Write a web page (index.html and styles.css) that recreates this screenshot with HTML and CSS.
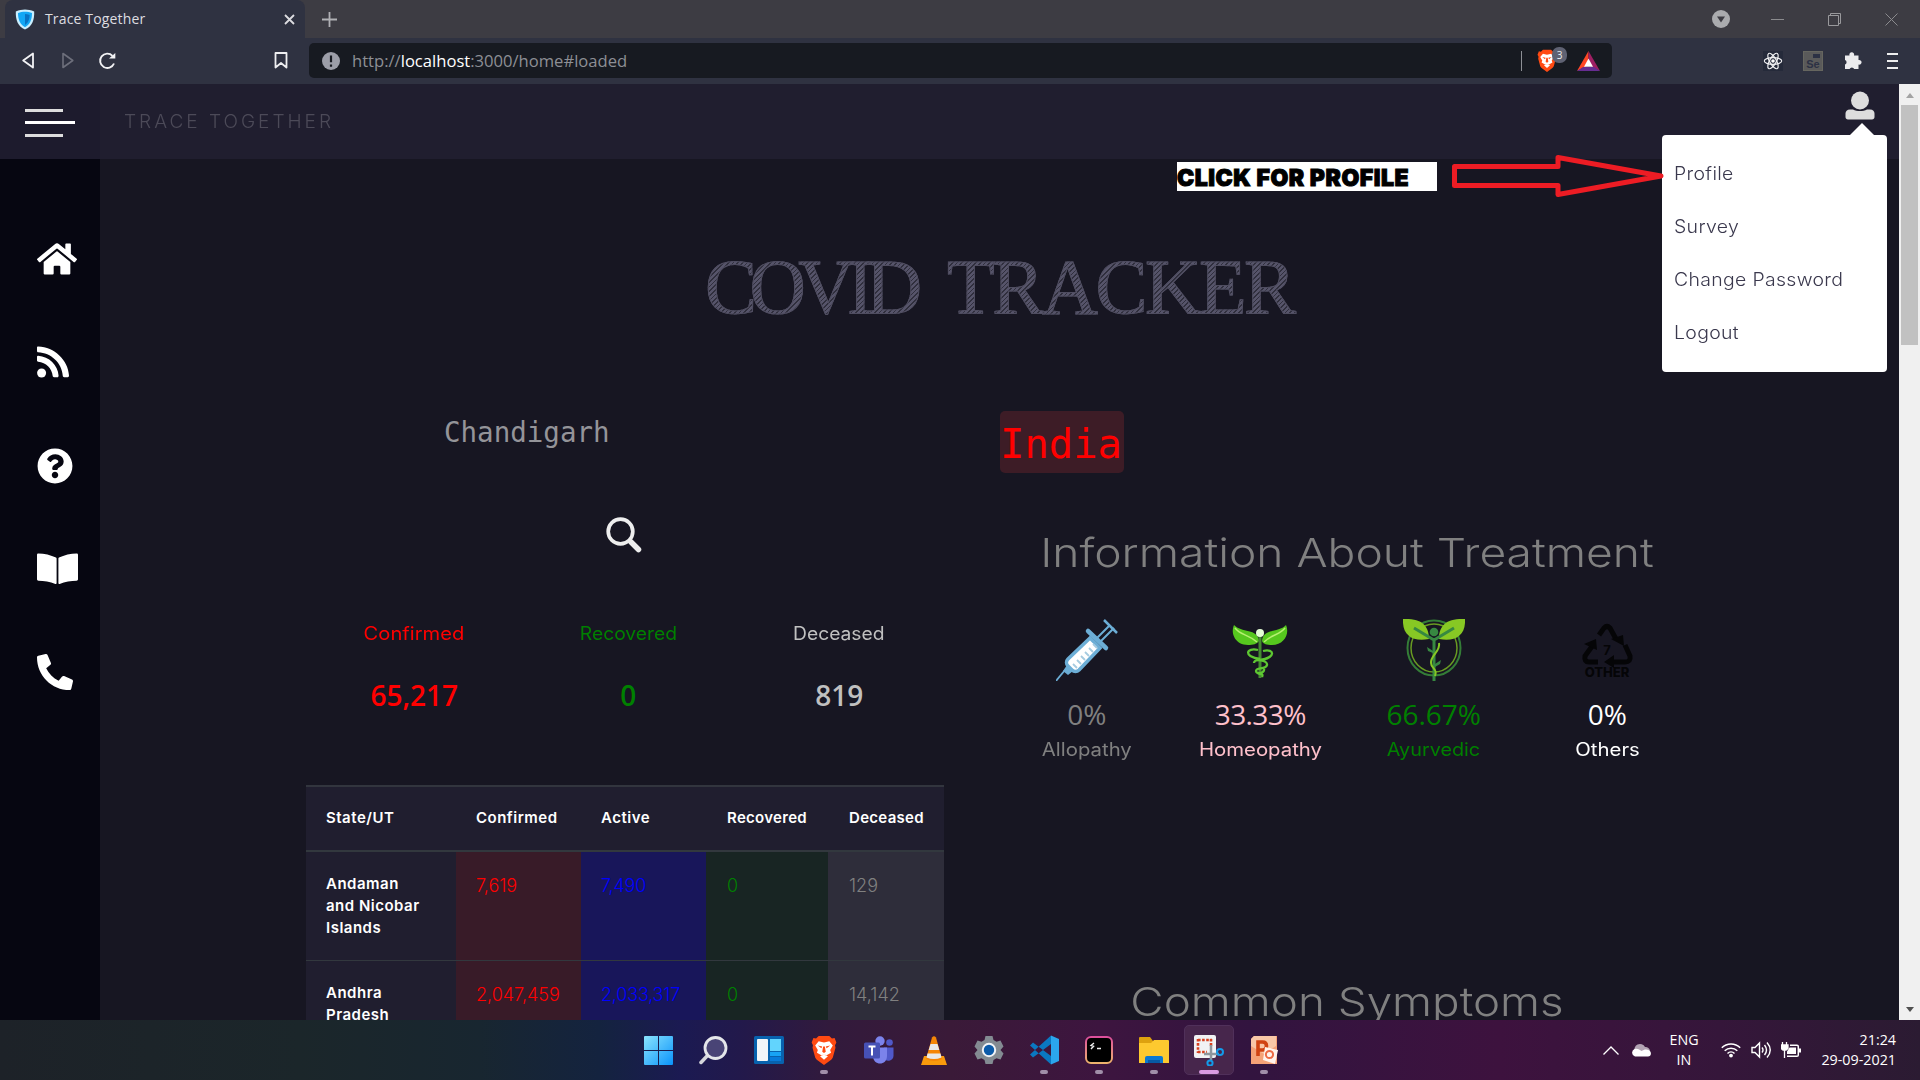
FILE: index.html
```html
<!DOCTYPE html>
<html lang="en">
<head>
<meta charset="utf-8">
<title>Trace Together</title>
<link rel="stylesheet" href="styles.css">
</head>
<body>
<div class="tabstrip">
  <div class="tab">
    <svg class="shield" viewBox="0 0 20 21"><path d="M10 .5C13 .5 16 1.2 19.2 2.4 19.5 11 17 17.5 10 20.5 3 17.5.5 11 .8 2.4 4 1.2 7 .5 10 .5z" fill="#c9efff"/><path d="M10 2.8c2.300 0 4.800.5 7 1.300C17 10.500 15 15.500 10 18.200 5 15.500 3 10.500 3 4.100 5.200 3.300 7.700 2.800 10 2.800z" fill="#12a7f5"/><path d="M10 5v11c3.500-2.500 4.500-6 4.700-10C13 5.300 11.500 5 10 5z" fill="#0873c4"/></svg>
    <span class="tab-title">Trace Together</span>
    <svg width="11" height="11" viewBox="0 0 11 11"><path d="M1 1l9 9M10 1l-9 9" stroke="#dcdce0" stroke-width="1.800"/></svg>
  </div>
  <svg class="plus" width="15" height="15" viewBox="0 0 15 15"><path d="M7.500 0v15M0 7.500h15" stroke="#b0b0b4" stroke-width="1.800"/></svg>
  <div class="window-buttons">
    <svg width="18" height="18" viewBox="0 0 18 18"><circle cx="9" cy="9" r="9" fill="#aaabae"/><path d="M5 6.500h8L9 12.500z" fill="#3d3c43"/></svg>
    <svg width="13" height="13" viewBox="0 0 13 13"><path d="M0 6.500h13" stroke="#8b8b8e"/></svg>
    <svg width="13" height="13" viewBox="0 0 13 13"><path d="M.5 2.500h10v10H.5zM2.500 2.500v-2h10v10h-2" fill="none" stroke="#99999c"/></svg>
    <svg width="13" height="13" viewBox="0 0 13 13"><path d="M.5.5l12 12M12.500.5l-12 12" stroke="#8b8b8e"/></svg>
  </div>
</div>

<div class="toolbar">
  <svg class="nav-back" width="12" height="17" viewBox="0 0 12 17"><path d="M11 1.500v14L1.200 8.500z" fill="none" stroke="#f2f2f4" stroke-width="1.800" stroke-linejoin="round"/></svg>
  <svg class="nav-fwd" width="12" height="17" viewBox="0 0 12 17"><path d="M1 1.500v14l9.800-7z" fill="none" stroke="#6d6f7b" stroke-width="1.600" stroke-linejoin="round"/></svg>
  <svg class="nav-reload" width="18" height="18" viewBox="0 0 18 18"><path d="M14.500 3.800A7.200 7.200 0 1 0 16 11.500" fill="none" stroke="#f2f2f4" stroke-width="1.900"/><path d="M11 6.500h6.300V1z" fill="#f2f2f4"/></svg>
  <svg class="bookmark" width="14" height="17" viewBox="0 0 14 17"><path d="M1.500 1h11v14.500L7 11l-5.500 4.500z" fill="none" stroke="#eeeef0" stroke-width="1.800" stroke-linejoin="round"/></svg>
  <div class="urlbar">
    <svg class="info" width="18" height="18" viewBox="0 0 18 18"><circle cx="9" cy="9" r="9" fill="#9c9ea8"/><path d="M9 3.500v6.800M9 12.500v2.200" stroke="#171a21" stroke-width="2.200"/></svg>
    <span class="url">http://<b>localhost</b>:3000/home#loaded</span>
    <span class="url-sep"></span>
    <span class="shields">
      <svg width="20" height="23" viewBox="0 0 28 34"><use href="#lion"/></svg>
      <span class="badge">3</span>
    </span>
    <svg width="23" height="20" viewBox="0 0 23 20"><path d="M11.500 0L0 20l11.500-6z" fill="#ff4724"/><path d="M11.500 0L23 20l-11.500-6z" fill="#9e1f63"/><path d="M0 20h23l-6-4H6z" fill="#662d91"/><path d="M11.500 7.500L16 15.800H7z" fill="#fff"/></svg>
  </div>
  <div class="extensions">
    <svg width="20" height="20" viewBox="0 0 20 20"><rect width="20" height="20" fill="#252a3a"/><g fill="none" stroke="#f0f0f2" stroke-width="1.200"><ellipse cx="10" cy="10" rx="8.700" ry="3.300"/><ellipse cx="10" cy="10" rx="8.700" ry="3.300" transform="rotate(60 10 10)"/><ellipse cx="10" cy="10" rx="8.700" ry="3.300" transform="rotate(120 10 10)"/></g><circle cx="10" cy="10" r="1.800" fill="#fff"/></svg>
    <span class="selenium"><i></i>Se</span>
    <svg width="19" height="19" viewBox="0 0 19 19"><path d="M1 4.500h4.500a2.400 2.400 0 1 1 4.500 0h4.500V9a2.400 2.400 0 1 1 0 4.600V18H10.200a2.500 2.500 0 0 0-4.600 0H1v-4.600a2.400 2.400 0 0 0 0-4.500z" fill="#ececee"/></svg>
    <span class="menu-lines"><i></i><i></i><i></i></span>
  </div>
</div>

<div class="viewport">
  <div class="page">
    <header class="site-header">
      <div class="burger-cell"><span class="burger"><i></i><i></i><i></i></span></div>
      <span class="brand">TRACE TOGETHER</span>
      <div class="account">
        <svg width="30" height="30" viewBox="0 0 30 30"><circle cx="15" cy="9.500" r="9" fill="#ddd"/><path d="M5 18.500h3c4 2 10 2 14 0h3c3 0 4.500 2 4.500 4v3.500c0 1.500-1 2.500-2.500 2.500H3C1.500 28.500.5 27.500.5 26v-3.500c0-2 1.500-4 4.500-4z" fill="#ddd"/></svg>
        <nav class="dropdown"><a>Profile</a><a>Survey</a><a>Change Password</a><a>Logout</a></nav>
      </div>
    </header>
    <div class="body">
      <nav class="sidebar">
        <svg width="40" height="36" viewBox="0 0 576 512"><path d="M280.370 148.260L96 300.110V464a16 16 0 0 0 16 16l112.060-.29a16 16 0 0 0 15.920-16V368a16 16 0 0 1 16-16h64a16 16 0 0 1 16 16v95.640a16 16 0 0 0 16 16.050L464 480a16 16 0 0 0 16-16V300L295.670 148.260a12.190 12.190 0 0 0-15.300 0zM571.600 251.470L488 182.560V44.050a12 12 0 0 0-12-12h-56a12 12 0 0 0-12 12v72.610L318.470 43a48 48 0 0 0-61 0L4.340 251.470a12 12 0 0 0-1.600 16.900l25.500 31A12 12 0 0 0 45.150 301l235.220-193.740a12.190 12.190 0 0 1 15.300 0L530.900 301a12 12 0 0 0 16.900-1.600l25.500-31a12 12 0 0 0-1.700-16.930z"/></svg>
        <svg width="32" height="36" viewBox="0 0 32 36"><circle cx="4.600" cy="29" r="4.500"/><path d="M0 5v-1.500C0 2.800.6 2.400 1.200 2.500 17.500 3.100 31 16 32 31.500c0 1-.5 1.700-1.300 1.700h-3.600c-.7 0-1.200-.5-1.300-1.200C25 19 14 8.800 1.100 8.300.4 8.200 0 7.700 0 7zM0 14v-1.300c0-.7.5-1.100 1.200-1C12 12.500 21 21 21.600 31.700c0 .9-.5 1.500-1.200 1.500H17c-.7 0-1.200-.5-1.300-1.100C15 24.500 9 18.300 1.100 17.800.5 17.700 0 17.300 0 16.600z"/></svg>
        <svg width="36" height="36" viewBox="0 0 512 512"><path d="M504 256c0 136.997-111.043 248-248 248S8 392.997 8 256C8 119.083 119.043 8 256 8s248 111.083 248 248zM262.655 90c-54.497 0-89.255 22.957-116.549 63.758-3.536 5.286-2.353 12.415 2.715 16.258l34.699 26.310c5.205 3.947 12.621 3.008 16.665-2.122 17.864-22.658 30.113-35.797 57.303-35.797 20.429 0 45.698 13.148 45.698 32.958 0 14.976-12.363 22.667-32.534 33.976C247.128 238.528 216 254.941 216 296v4c0 6.627 5.373 12 12 12h56c6.627 0 12-5.373 12-12v-1.333c0-28.462 83.186-29.647 83.186-106.667 0-58.002-60.165-102-116.531-102zM256 338c-25.365 0-46 20.635-46 46 0 25.364 20.635 46 46 46s46-20.636 46-46c0-25.365-20.635-46-46-46z"/></svg>
        <svg width="41" height="36" viewBox="0 0 41 36"><path d="M0 3.800c0-.9.600-1.400 1.400-1.400C7 2.600 14 3.800 19 6.600c.5.300.6.600.6 1.100v24.600c0 .6-.6.900-1.200.6C13 30.500 7 29.900 1.400 29.700.6 29.600 0 29 0 28.300zM41 3.800c0-.9-.6-1.400-1.400-1.400C34 2.600 27 3.800 22 6.600c-.5.300-.6.600-.6 1.100v24.600c0 .6.600.9 1.200.6 5.400-2.400 11.400-3 17-3.200.8-.1 1.400-.7 1.400-1.400z"/></svg>
        <svg class="flip" width="36" height="36" viewBox="0 0 512 512"><path d="M493.400 24.600l-104-24c-11.300-2.600-22.900 3.300-27.500 13.900l-48 112c-4.200 9.800-1.400 21.300 6.900 28l60.600 49.600c-36 76.700-98.900 140.500-177.200 177.200l-49.600-60.600c-6.800-8.300-18.200-11.100-28-6.900l-112 48C3.900 366.500-2 378.100.6 389.400l24 104C27.100 504.200 36.700 512 48 512c256.100 0 464-207.500 464-464 0-11.200-7.700-20.900-18.600-23.400z"/></svg>
      </nav>
      <main class="main">
        <h1 class="title"><span class="word-a">COVID</span> <span>TRACKER</span></h1>
        <div class="columns">
          <section class="region">
            <div class="place">Chandigarh</div>
            <svg class="search" width="36" height="36" viewBox="0 0 36 36"><circle cx="14.500" cy="14.500" r="12.300" fill="none" stroke="#eee" stroke-width="3.700"/><path d="M25 25l7.500 7.500" stroke="#eee" stroke-width="5.500" stroke-linecap="round"/></svg>
            <div class="stats">
              <div class="stat red"><span class="wide">Confirmed</span><strong>65,217</strong></div>
              <div class="stat green"><span>Recovered</span><strong>0</strong></div>
              <div class="stat silver"><span>Deceased</span><strong>819</strong></div>
            </div>
            <table class="states">
              <colgroup><col class="c1"><col class="c2"><col class="c3"><col class="c4"><col class="c5"></colgroup>
              <thead><tr><th>State/UT</th><th>Confirmed</th><th>Active</th><th>Recovered</th><th>Deceased</th></tr></thead>
              <tbody>
                <tr><th>Andaman and Nicobar Islands</th><td class="conf">7,619</td><td class="act">7,490</td><td class="rec">0</td><td class="dec">129</td></tr>
                <tr><th>Andhra Pradesh</th><td class="conf">2,047,459</td><td class="act">2,033,317</td><td class="rec">0</td><td class="dec">14,142</td></tr>
              </tbody>
            </table>
          </section>
          <section class="country">
            <div class="india">India</div>
            <h2>Information About Treatment</h2>
            <div class="treatments">
              <div class="treat gray">
                <svg width="62" height="62" viewBox="0 0 62 62"><path d="M0 62l9-11" stroke="#6caed6" stroke-width="1.800"/><path d="M7 52l4-6 6 6-5 4z" fill="#6caed6"/><path d="M34 19L12 40c-2 2-2 5 0 7l4 4c2 2 5 2 7 0l21-22z" fill="#fff" stroke="#6caed6" stroke-width="3.500"/><path d="M32 12l18 17" stroke="#6caed6" stroke-width="4.500" stroke-linecap="round"/><path d="M41 19L54 6M45 22L58 9" stroke="#6caed6" stroke-width="2"/><path d="M48 1l13 13" stroke="#6caed6" stroke-width="2.500"/><path d="M37 25l4 4M33 29l4 4M29 33l4 4M25 37l4 4M21 41l4 4M17 45l4 4" stroke="#a6cbe0" stroke-width="1.800"/></svg>
                <b>0%</b><span>Allopathy</span></div>
              <div class="treat pink">
                <svg width="62" height="62" viewBox="0 0 62 62"><path d="M30 22C29 9 12 14 5 6c-4 9 2 20 14 20 5 0 9-1 11-4z" fill="#56c71e"/><path d="M33 22C34 9 50 14 57 6c4 9-2 20-14 20-5 0-9-1-10-4z" fill="#56c71e"/><path d="M6 9c5 7 13 6 22 14M56 9c-5 7-13 6-21 14" stroke="#b5ef70" fill="none" stroke-width="1.500"/><path d="M31 17v42" stroke="#458b32" stroke-width="3"/><path d="M31 40c-17-2-14-12-2-9M31 41c16-2 15-12 3-9M25 44c0-5 14-3 13 2s-11 2-11 6 9 2 8-2M28 53c2 4 7 0 5 5" fill="none" stroke="#5ec832" stroke-width="2.300"/><circle cx="31" cy="14" r="4" fill="#e4ffd5"/></svg>
                <b class="tight">33.33%</b><span>Homeopathy</span></div>
              <div class="treat green">
                <svg width="62" height="62" viewBox="0 0 62 62"><ellipse cx="31" cy="29" rx="26.500" ry="27.500" fill="none" stroke="#347d37" stroke-width="2"/><ellipse cx="31" cy="29" rx="23" ry="24" fill="none" stroke="#689b22" stroke-width="1.500"/><path d="M0 0c20-1 26 8 26 20C10 23-1 17 0 0zM62 0c-20-1-26 8-26 20C52 23 63 17 62 0z" fill="#87c824"/><path d="M11 9l20 12L51 9M31 19v43" fill="none" stroke="#378841" stroke-width="3"/><circle cx="31" cy="13" r="4.300" fill="#378841"/><path d="M36 24c2 8-9 13-8 20 0 6 7 5 4 13" fill="none" stroke="#86c725" stroke-width="2"/><path d="M32 45l6-4-1 4-5 3zM30 32l-6-4 1 4 5 2z" fill="#378841"/></svg>
                <b>66.67%</b><span class="less">Ayurvedic</span></div>
              <div class="treat white">
                <svg width="62" height="62" viewBox="0 0 62 62" fill="none" stroke="#050507" stroke-width="5"><path d="M23 16l5-7q3-3 6 0l6 11M17 26L9 37q-1 6 4 6h9M49 26l5 11q1 6-5 6H37"/><g fill="#050507" stroke="none"><path d="M35 20l12-4 1 11zM8 25l12-5 1 11zM38 36v13l-10-6z"/><text x="31" y="36" text-anchor="middle" class="seven">7</text><text x="31" y="58" text-anchor="middle" class="other">OTHER</text></g></svg>
                <b>0%</b><span>Others</span></div>
            </div>
            <h2 class="symptoms">Common Symptoms</h2>
          </section>
        </div>
      </main>
    </div>
    <div class="callout">CLICK FOR PROFILE</div>
    <svg class="arrow" width="216" height="46" viewBox="0 0 216 46"><path d="M4.500 18.500H108V9.500L211 28 108 46.500 108 37.500H4.500z" transform="translate(0 -5)" fill="none" stroke="#ed1c24" stroke-width="5" stroke-linejoin="round"/></svg>
  </div>
  <div class="scrollbar"><i class="up"></i><i class="thumb"></i><i class="down"></i></div>
</div>

<footer class="taskbar">
  <div class="apps">
    <span class="app"><svg width="29" height="29" viewBox="0 0 29 29"><linearGradient id="w" x2="1" y2="1"><stop stop-color="#8ae4fd"/><stop offset="1" stop-color="#0a93fb"/></linearGradient><path d="M0 1q0-1 1-1h13v14H0zM15 0h13q1 0 1 1v13H15zM0 15h14v14H1q-1 0-1-1zM15 15h14v13q0 1-1 1H15z" fill="url(#w)"/></svg></span>
    <span class="app"><svg width="29" height="29" viewBox="0 0 29 29"><path d="M9 19l-7 7.500" stroke="#d5d7dc" stroke-width="3.500" stroke-linecap="round"/><circle cx="16.500" cy="12" r="10.500" fill="#494476" stroke="#e4e6ea" stroke-width="2.800"/></svg></span>
    <span class="app"><svg width="30" height="28" viewBox="0 0 30 28"><rect width="30" height="28" rx="1.500" fill="#0862ae"/><rect x="3" y="3" width="11" height="22" rx="1" fill="#f3f5f8"/><path d="M16 3h11v12H16z" fill="#62d4fd"/><path d="M16 16h11v4H16z" fill="#17a3f5"/><path d="M16 21h11v4H16z" fill="#077ad9"/></svg></span>
    <span class="app on"><svg width="26" height="30" viewBox="0 0 28 34"><g id="lion"><path d="M8 1h12l3 3 3-.5 2 5-1.500 3 .5 3-3 11q-1 2-3 3.500L14 34l-7-5q-2-1.500-3-3.500l-3-11 .5-3L0 8.500l2-5 3 .5z" fill="#ff4a12"/><path d="M14 8.500L20 7l4 5-3 5 1 3-5 3-3-1-3 1-5-3 1-3-3-5 4-5zM9.500 24l4.500-2 4.500 2L14 28z" fill="#fff"/><path d="M7 12l5 1-1 2zM21 12l-5 1 1 2zM13 13h2l1 6-2 1.500L12 19zM9 17l2 4M19 17l-2 4" fill="#ff4a12"/></g></svg></span>
    <span class="app"><svg width="30" height="29" viewBox="0 0 30 29"><circle cx="16" cy="5" r="4.700" fill="#7b83eb"/><circle cx="25.500" cy="6.500" r="3.300" fill="#5059c9"/><path d="M20 11.500h9.500v8c0 6-7 6-9.500 4z" fill="#5059c9"/><path d="M9 11.500h14V20c0 10-14 10-14 0z" fill="#7b83eb"/><rect y="6.500" width="16" height="16" rx="1.500" fill="#4651b5"/><path d="M4.500 10.500h7M8 10.500v9" stroke="#fff" stroke-width="2"/></svg></span>
    <span class="app"><svg width="26" height="29" viewBox="0 0 26 29"><path d="M3 20h20l3 9H0z" fill="#f99a0c"/><path d="M11 1.500q2-2.500 4 0L21 23q-8 4-16 0z" fill="#f58606"/><path d="M9.500 8h7l1.800 6H7.700zM6.500 17.500h13l1 4q-7.500 3-15 0z" fill="#e9e9e9"/></svg></span>
    <span class="app"><svg width="30" height="30" viewBox="0 0 30 30"><path d="M11.500 1h7l1 4 3 1.700L26.500 5.500l3 6L26.500 15l3 3.500-3 6-4-1.200-3 1.700-1 4h-7l-1-4-3-1.700-4 1.200-3-6 3-3.500-3-3.500 3-6 4 1.200 3-1.700z" fill="#838b92"/><circle cx="15" cy="15" r="6.200" fill="#0b5ba9" stroke="#f0f3f6" stroke-width="2"/></svg></span>
    <span class="app on"><svg width="30" height="30" viewBox="0 0 30 30"><path d="M22 .5l8 3.500v22l-8 3.500z" fill="#2ba6ed"/><path d="M22 .5L1 19.500l3 3L22 9zM22 29.500L1 10.500l3-3L22 21z" fill="#0a78c1"/></svg></span>
    <span class="app on"><svg width="28" height="28" viewBox="0 0 28 28"><linearGradient id="t" y2="1" x2="0"><stop stop-color="#dd4f9d"/><stop offset="1" stop-color="#eeb36d"/></linearGradient><rect x="1" y="1" width="26" height="26" rx="5" fill="#000" stroke="url(#t)" stroke-width="2"/><path d="M9 7L6 9.500l2.500.8L6 13M12 12.500h4" fill="none" stroke="#eee" stroke-width="1.400"/></svg></span>
    <span class="app on"><svg width="30" height="28" viewBox="0 0 30 28"><path d="M0 2q0-1 1-1h10l3 4v8H0z" fill="#dda20f"/><path d="M0 7h12l3-3h14q1 0 1 1v22H0z" fill="#fdc92f"/><path d="M6 27v-5q0-2 2-2h14q2 0 2 2v5z" fill="#0b78d1"/><path d="M9 24h12v3H9z" fill="#0759a5"/></svg></span>
    <span class="app on active"><svg width="30" height="31" viewBox="0 0 30 31"><rect width="22" height="23" rx="2" fill="#f1f2f4"/><path d="M4 5h14M4 17h9M4 4v14M17 4v7" fill="none" stroke="#d8401e" stroke-width="2.600" stroke-dasharray="2.600 1.500"/><path d="M17 10v15M10 19h15" stroke="#8e969c" stroke-width="2.500"/><circle cx="16" cy="28" r="2.600" fill="none" stroke="#139bea" stroke-width="2"/><circle cx="26" cy="17" r="3" fill="none" stroke="#139bea" stroke-width="2"/></svg></span>
    <span class="app on"><svg width="28" height="28" viewBox="0 0 28 28"><path d="M1 3L4 0h23v28H1z" fill="#f5a277"/><path d="M4 0h22v10L14 18 1 10V3z" fill="#f9c7a7"/><path d="M8 20V6h4.500q4 0 4 4t-4 4H8" fill="none" stroke="#d04312" stroke-width="3.600"/><path d="M15 11l13 3-3 14-12-4z" fill="#fff3ec"/><circle cx="19.500" cy="18.500" r="3.600" fill="none" stroke="#ed6b45" stroke-width="2"/></svg></span>
  </div>
  <div class="tray">
    <svg class="caret" width="16" height="9" viewBox="0 0 16 9"><path d="M.5 8.500L8 1l7.500 7.500" fill="none" stroke="#fff" stroke-width="1.300"/></svg>
    <svg class="cloud" width="20" height="14" viewBox="0 0 20 14"><path d="M4 9a5.500 5.500 0 0 1 10-5 4.500 4.500 0 0 1 5 4l-8 4z" fill="#b2a3b3"/><path d="M4 13.500a4 4 0 0 1-.5-7.500c3-1 5 .5 7 2 2-1.500 5-2 7-1 4 2 2.500 6.500-.5 6.500z" fill="#fff"/></svg>
    <div class="lang"><span>ENG</span><span>IN</span></div>
    <svg class="wifi" width="20" height="16" viewBox="0 0 20 16"><g fill="none" stroke="#fff" stroke-width="1.500"><path d="M.8 5.800a13 13 0 0 1 18.400 0M3.700 8.700a9 9 0 0 1 12.600 0M6.500 11.500a5 5 0 0 1 7 0"/></g><circle cx="10" cy="13.600" r="1.900" fill="#fff"/></svg>
    <svg class="vol" width="21" height="18" viewBox="0 0 21 18"><g fill="none" stroke="#fff" stroke-width="1.400"><path d="M1 6.500h3L8.500 2v14L4 11.500H1zM11 6.500q2 2.500 0 5M13.500 4q4 5 0 10M16 1.500q6.500 7.500 0 15"/></g></svg>
    <svg width="20" height="17" viewBox="0 0 20 17"><path d="M1.500 0v3M5.500 0v3M0 3h7v3.500L5 8H2L0 6.500zM3.500 7v9" stroke="#fff" stroke-width="1.300" fill="#fff"/><path d="M9 3.200h7q1.300 0 1.300 1.300v8.500q0 1.300-1.300 1.300H6" fill="none" stroke="#fff" stroke-width="1.500"/><path d="M8.500 5.500h6.500v6.500H6V9.500zM18 6.500h2v4h-2z" fill="#fff"/></svg>
    <div class="clock"><span>21:24</span><span>29-09-2021</span></div>
  </div>
</footer>
</body>
</html>
```
FILE: styles.css
```css
* { box-sizing: border-box; }
html, body { height: 100%; }
body { margin: 0; display: flex; flex-direction: column; overflow: hidden; background: #171622; font-family: Inter, "Open Sans", sans-serif; }
svg { display: block; flex: none; }
i { display: block; }

/* Browser tab strip */
.tabstrip { height: 38px; flex: none; display: flex; align-items: center; padding-left: 5px; background: #3d3c43; }
.tab { width: 300px; height: 38px; display: flex; align-items: center; padding: 0 10px; background: #2f3241; border-radius: 8px 8px 0 0; }
.shield { width: 20px; height: 21px; }
.tab-title { flex: 1; margin-left: 10px; color: #dddde0; font: 14px/20px "Open Sans", sans-serif; letter-spacing: .15px; }
.plus { margin-left: 17px; }
.window-buttons { margin-left: auto; display: flex; align-items: center; gap: 44px; padding-right: 22px; }
.window-buttons svg:first-child { margin-right: -3px; }

/* Address bar */
.toolbar { height: 46px; flex: none; display: flex; align-items: center; padding: 0 0 1px 22px; background: #2f3241; }
.nav-fwd { margin-left: 28px; }
.nav-reload { margin-left: 24px; }
.bookmark { margin-left: 158px; }
.urlbar { width: 1303px; height: 35px; margin-left: 21px; display: flex; align-items: center; padding: 0 12px 0 13px; background: #171a21; border-radius: 5px; }
.url { flex: 1; margin-left: 12px; color: #8d8f95; font: 16.600px/24px "Open Sans", sans-serif; }
.url b { color: #fff; font-weight: 400; }
.url-sep { width: 1px; height: 20px; margin-right: 15px; background: #8d8f95; }
.shields { position: relative; margin-right: 20px; width: 20px; }
.badge { position: absolute; left: 15px; top: -2px; width: 15px; height: 16px; border-radius: 7px; background: #5f6273; color: #eee; font: 10px/16px "Open Sans", sans-serif; text-align: center; }
.extensions { margin-left: auto; display: flex; align-items: center; gap: 20.500px; padding-right: 22px; }
.selenium { position: relative; width: 20px; height: 20px; border: 1px solid #66665f; background: #5a5a5a; color: #2c3144; font: 700 11px/25px "Liberation Sans", sans-serif; text-align: center; }
.selenium i { position: absolute; right: 2px; top: 2px; width: 7px; height: 4px; background: #2c3144; }
.menu-lines { width: 11px; display: grid; gap: 5px; margin-left: 4px; }
.menu-lines i { height: 2px; background: #eee; }

/* Page viewport */
.viewport { flex: 1; min-height: 0; display: flex; overflow: hidden; }
.page { position: relative; width: 1899px; overflow: hidden; display: flex; flex-direction: column; }
.site-header { height: 75px; flex: none; display: flex; align-items: center; background: #201e2f; }
.burger-cell { width: 100px; height: 75px; padding: 25px; background: #1d1b2d; }
.burger { display: grid; gap: 9px; }
.burger i { width: 38px; height: 3px; background: #ddd; }
.burger i:nth-child(2) { width: 50px; height: 3px; margin-bottom: 1px; background: #fff; }
.brand { margin-left: 24px; color: #4c4a58; font-size: 18px; font-weight: 300; letter-spacing: 2.800px; transform: scaleX(1.060); transform-origin: left; }
.account { position: relative; align-self: flex-start; margin: 7px 24px 0 auto; }
.dropdown { position: absolute; z-index: 2; right: -12px; top: 44px; width: 225px; height: 237px; padding: 12px; border-radius: 4px; background: #fff; display: flex; flex-direction: column; }
.dropdown::before { content: ""; position: absolute; right: 13px; top: -12px; border: 12.500px solid transparent; border-top: 0; border-bottom-color: #fff; }
.dropdown a { color: #3a384d; font-size: 18px; font-weight: 300; line-height: 53px; letter-spacing: .300px; transform: scaleX(1.080); transform-origin: left; }
.body { display: flex; flex: 1; min-height: 0; }
.sidebar { width: 100px; padding: 82px 0 0 37px; display: flex; flex-direction: column; gap: 67.300px; background: #060611; fill: #fff; }
.flip { transform: scaleX(-1); }

.main { flex: 1; padding: 86px 0 0 206px; overflow: hidden; }
.title { width: 600px; margin: 0 0 0 399px; font: 400 78px/84px "Liberation Serif", serif; letter-spacing: -2.500px; word-spacing: 17px; white-space: nowrap; color: transparent; -webkit-text-stroke: 1px #4f4d60; background: repeating-linear-gradient(135deg, #56546a 0 2.200px, #302f3d 2.200px 3.300px); background-clip: text; -webkit-background-clip: text; }
.word-a { letter-spacing: -7.500px; }
.columns { display: grid; grid-template-columns: 638px 694px; column-gap: 56px; }
.place { margin: 83px 0 0 138px; color: #949499; font: 27.500px/40px "DejaVu Sans Mono", monospace; }
.search { margin: 65px 0 0 300px; }
.stats { display: grid; grid-template-columns: repeat(3, 212.500px); margin: 69px 0 0 2px; }
.stat { display: flex; flex-direction: column; align-items: center; gap: 29px; }
.stat.green { padding-left: 3px; }
.stat span { font-size: 18px; line-height: 24px; transform: scaleX(1.070); }
.stat span.wide { transform: scaleX(1.120); }
.stat strong { font: 600 28px/40px "Open Sans", sans-serif; }
.red { color: #f00; }
.green { color: #008000; }
.silver { color: #c0c0c0; }
.gray { color: #808080; }
.pink { color: #ffc0cb; }
.white { color: #fff; }

.states { width: 638px; margin-top: 70px; table-layout: fixed; border-collapse: separate; border-spacing: 0; background: #201e2f; }
.c1 { width: 150px; } .c2 { width: 125px; } .c3 { width: 125px; } .c4 { width: 122px; } .c5 { width: 116px; }
.states th { padding: 21px 10px 20px 20px; color: #fff; font-size: 15px; font-weight: 600; line-height: 22px; text-align: left; vertical-align: top; letter-spacing: .500px; border-bottom: 1px solid #32383e; }
.states thead th { height: 67px; padding-top: 20px; border-top: 2px solid #32353e; border-bottom: 2px solid #32383e; white-space: nowrap; padding-right: 0; }
.states thead th:nth-child(n+4) { padding-left: 21px; letter-spacing: .300px; }
.states td { height: 109px; padding: 22px 0 0 20px; vertical-align: top; font-size: 18px; font-weight: 300; line-height: 24px; border-bottom: 1px solid #32383e; }
.states th:first-child { padding-right: 30px; }
.conf { background: #381b28; color: #f00; }
.act { background: #18165a; color: #00f; }
.states .act { letter-spacing: -.200px; }
.rec { background: #182523; color: #008000; }
.dec { background: #2e2d3a; color: #808080; }
.states .rec, .states .dec { padding-left: 21px; }

.india { width: 124px; height: 62px; margin-top: 82px; padding-left: 0; border-radius: 5px; background: #3d1c26; color: #f00; font: 40.500px/66px "DejaVu Sans Mono", monospace; }
.country h2 { margin: 56px 0 0; color: #808080; font-size: 40px; font-weight: 300; line-height: 48px; text-align: center; transform: scaleX(1.155); }
.treatments { display: grid; grid-template-columns: repeat(4, 173.500px); margin: 42px 0 0; }
.treat { display: flex; flex-direction: column; align-items: center; }
.treat b { margin-top: 15px; font: 400 28px/36px "Open Sans", sans-serif; }
.treat b.tight { letter-spacing: -.600px; }
.treat span { margin-top: 6px; font-size: 18px; line-height: 24px; transform: scaleX(1.130); }
.treat span.less { transform: scaleX(1.100); }
.seven { font: 700 13px Inter, sans-serif; }
.other { font: 800 13px Inter, sans-serif; }
.country .symptoms { margin-top: 216px; transform: scaleX(1.145); }

/* Annotation over the page */
.callout { position: absolute; left: 1177px; top: 78px; width: 260px; height: 29px; background: #fff; color: #000; font-size: 23px; font-weight: 900; line-height: 32px; letter-spacing: .550px; white-space: nowrap; -webkit-text-stroke: 1px #000; }
.arrow { position: absolute; z-index: 3; left: 1450px; top: 69px; overflow: visible; }

.scrollbar { width: 21px; background: #f0f0f0; display: flex; flex-direction: column; align-items: center; }
.up { margin-top: 9px; border: 4.500px solid transparent; border-top: 0; border-bottom: 5px solid #a3a3a3; }
.thumb { width: 17px; height: 240px; margin-top: 7px; background: #c1c1c1; }
.down { margin: auto 0 8px; border: 4.500px solid transparent; border-bottom: 0; border-top: 5px solid #505050; }

/* Taskbar */
.taskbar { position: relative; height: 60px; flex: none; display: flex; align-items: center; padding-left: 633.500px; background: linear-gradient(90deg, #1d2228 0, #1b262a 300px, #182630 480px, #14233f 600px, #1b1a52 680px, #22194b 740px, #321a3c 830px, #3a1a38 950px, #3d153f 1100px, #32143f 1250px, #3d123e 1500px, #35163a 1720px, #2b1b32 1920px); }
.apps { display: flex; gap: 5px; }
.app { position: relative; width: 50px; height: 50px; display: flex; align-items: center; justify-content: center; border-radius: 5px; }
.app.on::after { content: ""; position: absolute; left: 21px; bottom: 1px; width: 8px; height: 4px; border-radius: 2px; background: #a18fa9; }
.app.active { background: #47264c; border: 1px solid #50305a; }
.app.active::after { left: 14px; width: 20px; bottom: 0; background: #d99be2; }
.tray { margin-left: auto; display: flex; align-items: center; padding-right: 24px; color: #fff; font: 14.300px/20px "Open Sans", sans-serif; }
.lang, .clock { display: flex; flex-direction: column; }
.lang { width: 38px; align-items: center; margin-left: 14px; }
.clock { width: 76px; align-items: flex-end; margin-left: 19px; }
.cloud { margin-left: 12px; }
.wifi { margin-left: 18px; }
.vol { margin: 0 9px 0 10px; }
```
